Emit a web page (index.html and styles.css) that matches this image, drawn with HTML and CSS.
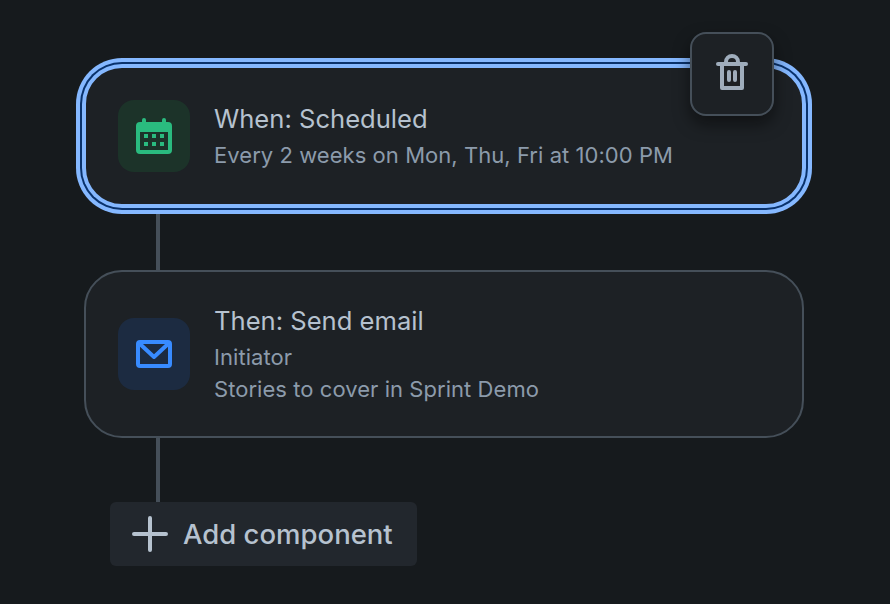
FILE: index.html
```html
<!DOCTYPE html>
<html lang="en">
<head>
  <meta charset="UTF-8" />
  <title>Rule builder</title>
  <link rel="stylesheet" href="styles.css">
</head>
<body>
  <div class="flow">

    <!-- trigger -->
    <div class="card selected">
      <div class="icon-box green">
        <svg width="48" height="48" viewBox="0 0 48 48">
          <path fill="#2ABB7F" fill-rule="evenodd" d="M12 10V8a2 2 0 0 1 4 0v2h16V8a2 2 0 0 1 4 0v2h2a4 4 0 0 1 4 4v24a4 4 0 0 1-4 4H10a4 4 0 0 1-4-4V14a4 4 0 0 1 4-4h2zM10 20v18h28V20H10z"/>
          <path fill="#2ABB7F" d="M14 22h4v4h-4zM22 22h4v4h-4zM30 22h4v4h-4zM14 30h4v4h-4zM22 30h4v4h-4zM30 30h4v4h-4z"/>
        </svg>
      </div>
      <div class="text">
        <div class="title">When: Scheduled</div>
        <div class="sub">Every 2 weeks on Mon, Thu, Fri at 10:00 PM</div>
      </div>
      <button class="delete">
        <svg width="48" height="48" viewBox="0 0 48 48">
          <path fill="none" stroke="#9FADBC" stroke-width="4" d="M18 14V12a6 6 0 0 1 12 0v2"/>
          <path fill="none" stroke="#9FADBC" stroke-width="4" stroke-linecap="round" d="M10 14h28"/>
          <path fill="none" stroke="#9FADBC" stroke-width="4" stroke-linejoin="round" d="M14 14v24h20V14"/>
          <path fill="none" stroke="#9FADBC" stroke-width="4" stroke-linecap="round" d="M21 22v8M27 22v8"/>
        </svg>
      </button>
    </div>

    <div class="line"></div>

    <!-- action -->
    <div class="card">
      <div class="icon-box blue">
        <svg width="48" height="48" viewBox="0 0 48 48">
          <rect x="8" y="12" width="32" height="24" rx="2" fill="none" stroke="#388BFF" stroke-width="4"/>
          <path d="M10 14l14 13 14-13" fill="none" stroke="#388BFF" stroke-width="4" stroke-linejoin="round"/>
        </svg>
      </div>
      <div class="text">
        <div class="title">Then: Send email</div>
        <div class="sub">Initiator</div>
        <div class="sub">Stories to cover in Sprint Demo</div>
      </div>
    </div>

    <div class="line"></div>

    <button class="add">
      <svg width="36" height="36" viewBox="0 0 36 36">
        <path d="M18 2v32M2 18h32" fill="none" stroke="#B6C2CF" stroke-width="4" stroke-linecap="round"/>
      </svg>
      <span>Add component</span>
    </button>
  </div>
</body>
</html>
```

FILE: styles.css
```css
body {
  margin: 0;
  background: #161A1D;
  font-family: Inter, "Liberation Sans", sans-serif;
  color: #B6C2CF;
  overflow: hidden;
}
.flow {
  width: 720px;
  padding: 66px 0 0 84px;
}
.card {
  position: relative;
  display: flex;
  align-items: center;
  gap: 24px;
  box-sizing: border-box;
  height: 168px;
  padding: 32px;
  background: #1D2125;
  border: 2px solid #454F59;
  border-radius: 38px;
}
.card.selected {
  height: 140px;
  border-color: #85B8FF;
  box-shadow: 0 0 0 2px #85B8FF, 0 0 0 4px #09326C, 0 0 0 8px #85B8FF;
}
.icon-box {
  display: flex;
  align-items: center;
  justify-content: center;
  width: 72px;
  height: 72px;
  flex: none;
  border-radius: 16px;
}
.icon-box.green {
  background: #1C3329;
}
.icon-box.blue {
  background: #1C2B41;
}
.title {
  margin-bottom: 2px;
  font-size: 25.6px;
  line-height: 36px;
}
.sub {
  font-size: 22px;
  line-height: 32px;
  letter-spacing: 0.05px;
  color: #8C9BAB;
}
.line {
  width: 4px;
  height: 64px;
  margin-left: 72px;
  background: #454F59;
}
.delete {
  position: absolute;
  top: -36px;
  right: 28px;
  display: flex;
  align-items: center;
  justify-content: center;
  box-sizing: border-box;
  width: 84px;
  height: 84px;
  padding: 0;
  background: #1D2125;
  border: 2px solid #454F59;
  border-radius: 16px;
  box-shadow: 0 8px 16px rgba(3, 4, 4, 0.5);
}
.add {
  display: flex;
  align-items: center;
  gap: 15px;
  height: 64px;
  margin-left: 26px;
  padding: 0 24px 0 22px;
  background: #22272D;
  border: none;
  border-radius: 6px;
  color: #B6C2CF;
  font-family: inherit;
  font-size: 27.5px;
  font-weight: 500;
}
```
